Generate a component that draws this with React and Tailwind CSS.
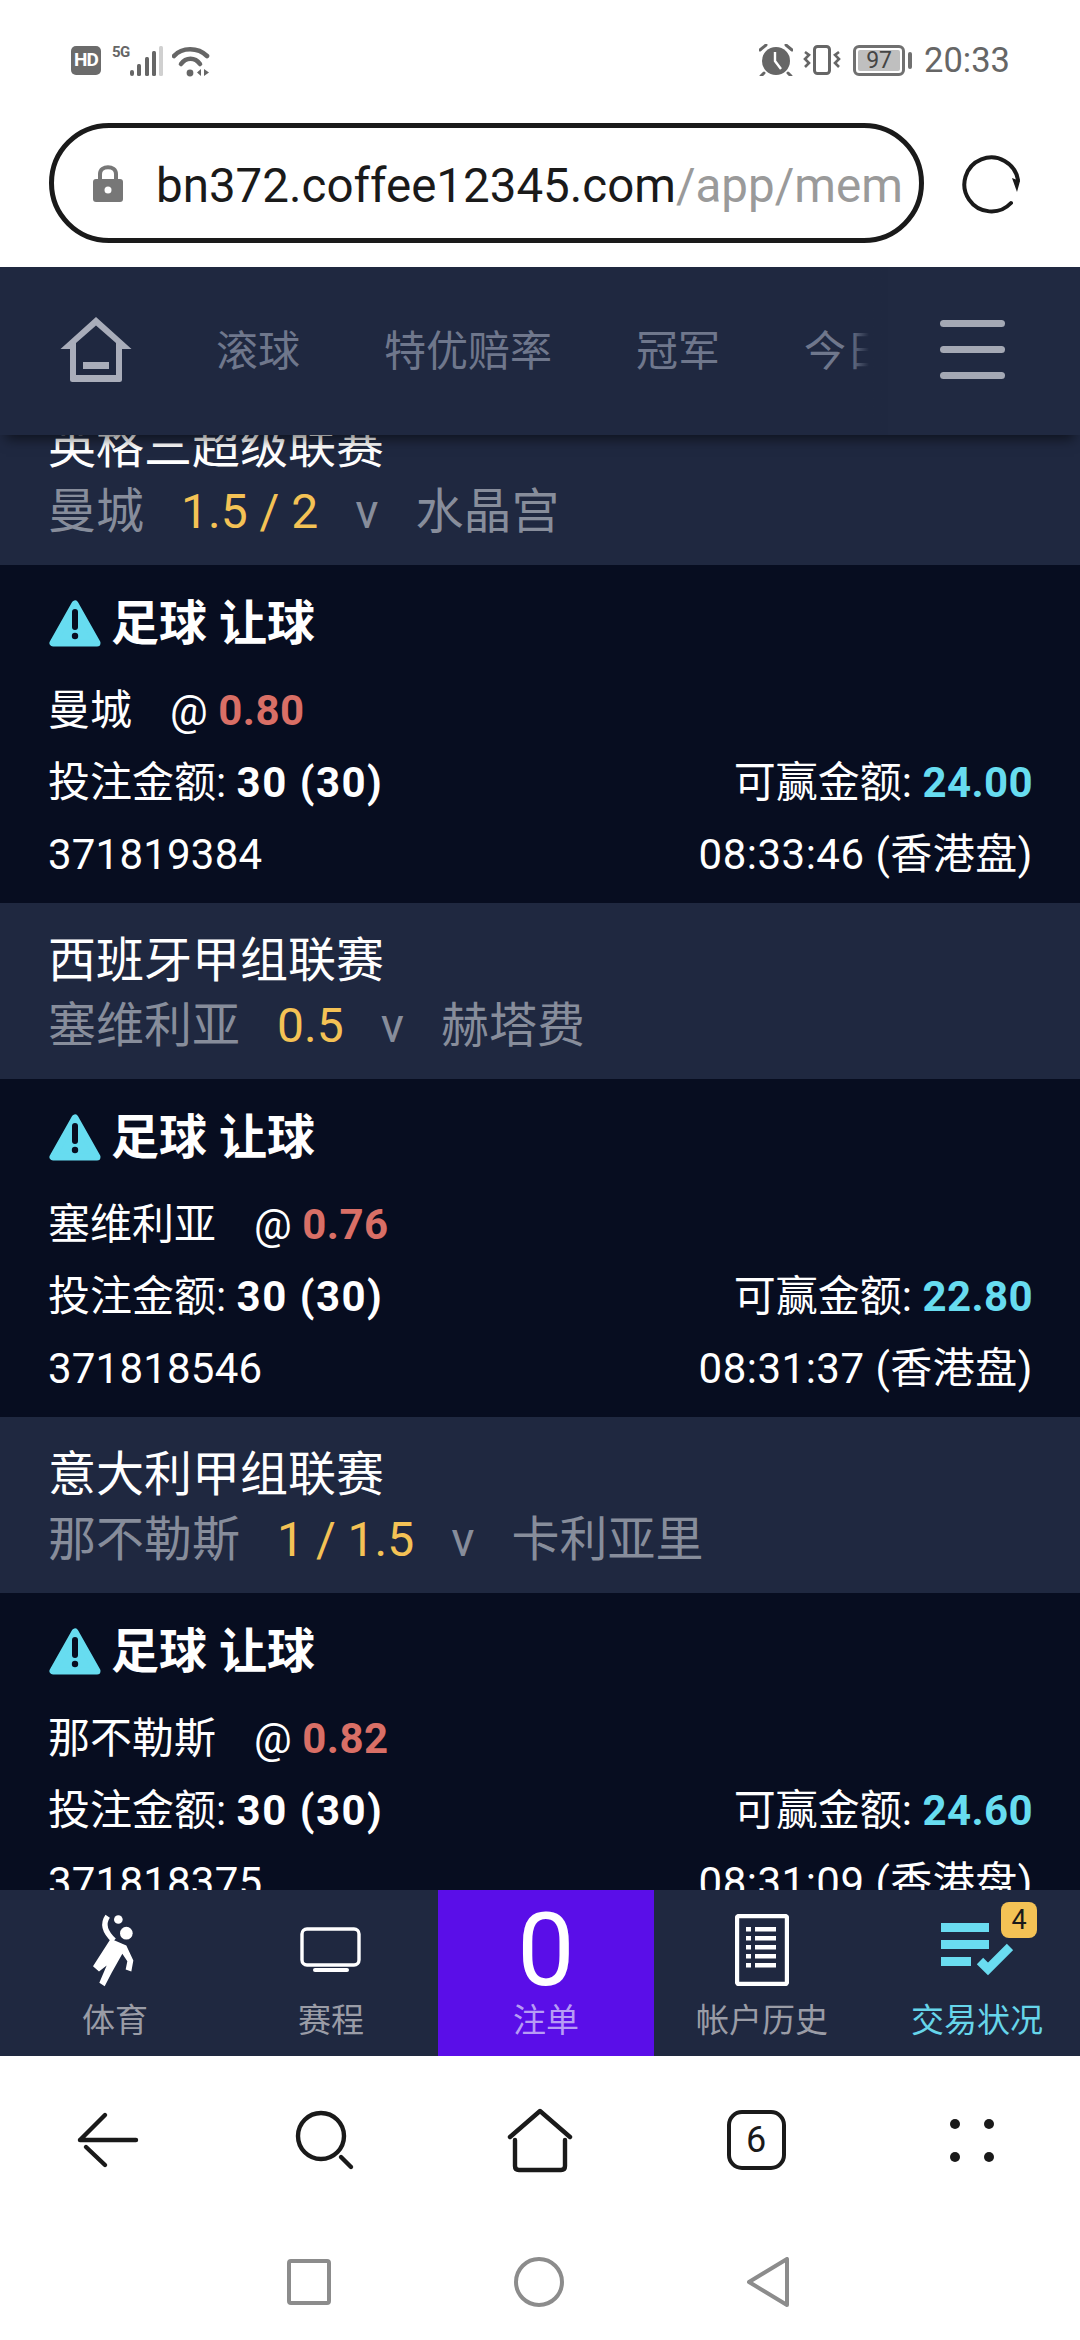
import React from "react";

const bets = [
  {
    league: "英格三超级联赛",
    home: "曼城",
    line: "1.5 / 2",
    away: "水晶宫",
    odds: "0.80",
    win: "24.00",
    id: "371819384",
    time: "08:33:46",
    clipped: true,
  },
  {
    league: "西班牙甲组联赛",
    home: "塞维利亚",
    line: "0.5",
    away: "赫塔费",
    odds: "0.76",
    win: "22.80",
    id: "371818546",
    time: "08:31:37",
  },
  {
    league: "意大利甲组联赛",
    home: "那不勒斯",
    line: "1 / 1.5",
    away: "卡利亚里",
    odds: "0.82",
    win: "24.60",
    id: "371818375",
    time: "08:31:09",
  },
];

const StatusBar = () => (
  <div className="flex h-[120px] items-center justify-between pl-[71px] pr-[70px] text-[#666666]">
    <div className="flex items-center">
      <div className="flex h-[29px] w-[30px] items-center justify-center rounded-[5px] bg-[#6b6b6b] text-[19px] font-bold tracking-[-1px] text-white">
        HD
      </div>
      <span className="mb-[16px] ml-[11px] text-[15px] font-bold leading-[14px] tracking-[-0.5px]">5G</span>
      <svg width="34" height="32" viewBox="0 0 34 32" className="mt-[1px]" fill="#666666">
        <rect x="0" y="25" width="4" height="6" rx="2" />
        <rect x="7" y="19" width="4" height="12" rx="1.5" />
        <rect x="15" y="12" width="4" height="19" rx="1.5" />
        <rect x="22" y="6" width="4" height="25" rx="1.5" />
        <rect x="29" y="1" width="4" height="30" rx="1.5" fill="#d0d0d0" />
      </svg>
      <svg width="38" height="32" viewBox="0 0 38 32" className="ml-[8px] mt-[1px]" fill="none">
        <path d="M2 11 C10 2 26 2 35 11" stroke="#666666" strokeWidth="4.6" strokeLinecap="round" />
        <path d="M9 19 C14 12 23 12 28 19" stroke="#666666" strokeWidth="4.6" strokeLinecap="round" />
        <circle cx="18" cy="28" r="3.4" fill="#666666" />
        <path d="M29 24 V31 L25 27.5 Z M32 24 V31 L37 27.5 Z" fill="#666666" />
      </svg>
    </div>
    <div className="flex items-center">
      <svg width="34" height="32" viewBox="0 0 34 32" fill="none">
        <circle cx="17" cy="17" r="14" fill="#666666" />
        <path d="M16 8 V17 L22 25" stroke="#ffffff" strokeWidth="2.4" />
        <path d="M1 6 L7 1 M33 6 L27 1 M5 29 L2 32 M29 29 L32 32" stroke="#666666" strokeWidth="3" strokeLinecap="round" />
      </svg>
      <svg width="38" height="30" viewBox="0 0 38 30" className="ml-[10px]" fill="none" stroke="#666666">
        <rect x="11.5" y="1.5" width="15" height="27" rx="3" strokeWidth="3" />
        <path d="M2 7 L6 10 L2 14 L6 18 L2 22 M36 7 L32 10 L36 14 L32 18 L36 22" strokeWidth="2.6" />
      </svg>
      <div className="ml-[12px] flex h-[31px] w-[52px] items-center justify-center rounded-[6px] border-[3px] border-[#707070]">
        <div className="flex h-[21px] w-[42px] items-center justify-center rounded-[2px] bg-[#bfbfbf] text-[23px] leading-none text-[#444444]">
          97
        </div>
      </div>
      <div className="ml-[3px] h-[17px] w-[4px] rounded-[2px] bg-[#707070]" />
      <span className="ml-[12px] text-[34.5px] leading-[40px]">20:33</span>
    </div>
  </div>
);

const BrowserBar = () => (
  <div className="flex h-[147px] items-start pl-[49px] pt-[3px]">
    <div className="flex h-[120px] w-[875px] items-center overflow-hidden rounded-full border-[5px] border-[#1a1a1a] pl-[38px]">
      <svg width="32" height="38" viewBox="0 0 32 38" className="shrink-0">
        <path d="M8 17 V10 C8 1 24 1 24 10 V17" stroke="#777777" strokeWidth="4" fill="none" />
        <rect x="1" y="15" width="30" height="23" rx="3" fill="#777777" />
        <circle cx="16" cy="26" r="3.5" fill="#ffffff" />
      </svg>
      <div className="ml-[32px] mt-[5px] overflow-hidden whitespace-nowrap text-[47.5px] leading-[64px] text-[#1a1a1a]">
        bn372.coffee12345.com<span className="text-[#9a9a9a]">/app/mem</span>
      </div>
    </div>
    <svg width="60" height="60" viewBox="0 0 60 60" fill="none" className="ml-[37px] mt-[31px]">
      <path d="M50 49 A27 27 0 1 1 57 26" stroke="#1a1a1a" strokeWidth="4" strokeLinecap="round" />
      <path d="M51 24 L59 27 L56 38 Z" fill="#1a1a1a" />
    </svg>
  </div>
);

const Header = () => (
  <div className="relative z-10 flex h-[168px] items-center bg-[#1f2840] shadow-[0_10px_12px_-6px_rgba(0,0,0,0.55)]">
    <div className="flex h-full w-[174px] shrink-0 items-center pl-[60px]">
      <svg width="72" height="66" viewBox="0 0 72 66" className="mb-[2px]" fill="#a9adba">
        <path
          fillRule="evenodd"
          d="M36 0 L71.5 32 H62 V62.5 Q62 65 59.5 65 H12.5 Q10 65 10 62.5 V32 H0.5 Z M36 8.5 L16 26 V58 H56 V26 Z"
        />
        <rect x="23" y="45" width="26" height="7" />
      </svg>
    </div>
    <div className="relative flex h-full w-[714px] items-center overflow-hidden whitespace-nowrap text-[42px] text-[#6f778c]">
      <span className="px-[42px]">滚球</span>
      <span className="px-[42px]">特优赔率</span>
      <span className="px-[42px]">冠军</span>
      <span className="px-[42px]">今日</span>
      <div className="absolute right-0 top-0 h-full w-[38px] bg-linear-to-r from-transparent to-[#1f2840] to-50%" />
    </div>
    <div className="flex h-full flex-1 flex-col items-end justify-center gap-[19px] bg-[#202941] pr-[75px] pb-[4px]">
      <div className="h-[7px] w-[65px] rounded-full bg-[#a4a8b4]" />
      <div className="h-[7px] w-[65px] rounded-full bg-[#a4a8b4]" />
      <div className="h-[7px] w-[65px] rounded-full bg-[#a4a8b4]" />
    </div>
  </div>
);

const WarningIcon = () => (
  <svg width="52" height="47" viewBox="0 0 52 47" className="shrink-0">
    <path d="M26 4 L4 43 H48 Z" fill="#67dcf0" stroke="#67dcf0" strokeWidth="7" strokeLinejoin="round" />
    <rect x="23" y="9" width="6" height="21" rx="3" fill="#070d20" />
    <circle cx="26" cy="36" r="3.2" fill="#070d20" />
  </svg>
);

const BetGroup = ({ bet }) => (
  <>
    <div
      className={
        bet.clipped
          ? "flex h-[130px] flex-col justify-end overflow-hidden bg-[#1f2840] pb-[21px] pl-[48px]"
          : "flex h-[176px] flex-col justify-end overflow-hidden bg-[#1f2840] pb-[21px] pl-[48px]"
      }
    >
      <div className="text-[48px] leading-[66px] text-white">{bet.league}</div>
      <div className="flex gap-[37px] text-[48px] leading-[64px] text-[#878d9b]">
        <span>{bet.home}</span>
        <span className="text-[#f4c255]">{bet.line}</span>
        <span>v</span>
        <span>{bet.away}</span>
      </div>
    </div>
    <div className="h-[338px] bg-[#070d20] pl-[48px] pr-[47px] pt-[22px] text-[42px] leading-[72px] text-white">
      <div className="mb-[15px] flex items-center gap-[10px] text-[48px] font-bold">
        <div className="ml-[1px] shrink-0">
          <WarningIcon />
        </div>
        <span className="pt-[1px]">足球 让球</span>
      </div>
      <div>
        <span className="mr-[38px]">{bet.home}</span>@ <span className="font-bold tracking-[0.5px] text-[#d96f66]">{bet.odds}</span>
      </div>
      <div className="flex justify-between">
        <div>
          投注金额: <span className="font-bold tracking-[1.5px]">30 (30)</span>
        </div>
        <div>
          可赢金额: <span className="font-bold tracking-[0.4px] text-[#67dcf0]">{bet.win}</span>
        </div>
      </div>
      <div className="flex justify-between">
        <div className="tracking-[0.2px]">{bet.id}</div>
        <div className="tracking-[0.5px]">{bet.time} (香港盘)</div>
      </div>
    </div>
  </>
);

const NavItem = ({ label, labelClass = "text-[#9a9ca6]", className = "", children }) => (
  <div className={`flex flex-col items-center pt-[16px] ${className}`}>
    <div className="relative flex h-[88px] w-full items-center justify-center">{children}</div>
    <div className={`mt-[7px] whitespace-nowrap text-[33px] leading-[40px] ${labelClass}`}>{label}</div>
  </div>
);

const BottomNav = () => (
  <div className="grid h-[166px] grid-cols-[216px_216px_216px_216px_210px] bg-[#1f2840] pl-[6px]">
    <NavItem label="体育" labelClass="ml-[2px] text-[#9a9ca6]">
      <svg width="50" height="77" viewBox="60 50 150 230" fill="#ffffff">
        <circle cx="148" cy="72" r="13" />
        <circle cx="172" cy="113" r="19" />
        <path d="M116 62 C100 85 108 110 135 135" stroke="#ffffff" strokeWidth="16" fill="none" />
        <path d="M125 130 L172 150 L193 195 L187 228 L170 222 L175 197 L160 175 L128 232 L107 272 L91 262 L113 210 L90 228 L72 212 Z" />
      </svg>
    </NavItem>
    <NavItem label="赛程" labelClass="ml-[2px] text-[#9a9ca6]">
      <svg width="62" height="46" viewBox="0 0 62 46" fill="none" className="ml-[2px]">
        <rect x="2" y="2" width="57" height="36" rx="5" stroke="#ffffff" strokeWidth="3.4" />
        <rect x="13" y="41" width="36" height="4" rx="2" fill="#ffffff" />
      </svg>
    </NavItem>
    <NavItem label="注单" labelClass="text-[#b79cf5]" className="bg-[#5a0ee8]">
      <span className="text-[102px] leading-[88px] text-white">0</span>
    </NavItem>
    <NavItem label="帐户历史">
      <svg width="54" height="72" viewBox="0 0 54 72" fill="#ffffff">
        <rect x="2" y="2" width="50" height="68" rx="2" fill="none" stroke="#ffffff" strokeWidth="4.4" />
        <rect x="11" y="13" width="5" height="4.5" />
        <rect x="20" y="13" width="21" height="4.5" />
        <rect x="11" y="22" width="5" height="4.5" />
        <rect x="20" y="22" width="21" height="4.5" />
        <rect x="11" y="31" width="5" height="4.5" />
        <rect x="20" y="31" width="21" height="4.5" />
        <rect x="11" y="40" width="5" height="4.5" />
        <rect x="20" y="40" width="21" height="4.5" />
        <rect x="11" y="49" width="5" height="4.5" />
        <rect x="20" y="49" width="21" height="4.5" />
      </svg>
    </NavItem>
    <NavItem label="交易状况" labelClass="ml-[4px] text-[#66d5ea]">
      <svg width="72" height="54" viewBox="0 0 72 54" fill="#6adcf0" className="ml-[4px]">
        <rect x="0" y="0" width="48" height="9" />
        <rect x="0" y="17" width="48" height="9" />
        <rect x="0" y="34" width="30" height="9" />
        <path d="M39 38 L47 46 L69 24" fill="none" stroke="#6adcf0" strokeWidth="9" />
      </svg>
      <div className="absolute right-[43px] top-[-4px] flex h-[36px] w-[36px] items-center justify-center rounded-[8px] bg-[#f4c255] text-[27px] leading-none text-[#1a1a1a]">
        4
      </div>
    </NavItem>
  </div>
);

const BrowserTools = () => (
  <div className="grid h-[168px] grid-cols-5 items-center justify-items-center text-[#1a1a1a]">
    <svg width="72" height="72" viewBox="0 0 72 72" fill="none" stroke="#1a1a1a" strokeWidth="4.4" strokeLinecap="round">
      <path d="M8 36 H64 M8 36 L33 11 M14 43 L33 61" />
    </svg>
    <svg width="72" height="72" viewBox="0 0 72 72" fill="none" stroke="#1a1a1a" strokeWidth="4.4" strokeLinecap="round" className="ml-[3px]">
      <circle cx="31" cy="32" r="23" />
      <path d="M51 53 L61 63" />
    </svg>
    <svg width="72" height="72" viewBox="0 0 72 72" fill="none" stroke="#1a1a1a" strokeWidth="4.4" strokeLinecap="round">
      <path d="M6 33 L36 7 L66 33" strokeLinejoin="round" />
      <path d="M11 36 V62 Q11 66 15 66 H57 Q61 66 61 62 V36" />
    </svg>
    <div className="flex h-[60px] w-[59px] items-center justify-center rounded-[15px] border-[4px] border-[#1a1a1a] text-[36px] leading-none">
      6
    </div>
    <div className="grid grid-cols-2 gap-x-[24px] gap-y-[23px]">
      <div className="h-[10px] w-[10px] rounded-full bg-[#1a1a1a]" />
      <div className="h-[10px] w-[10px] rounded-full bg-[#1a1a1a]" />
      <div className="h-[10px] w-[10px] rounded-full bg-[#1a1a1a]" />
      <div className="h-[10px] w-[10px] rounded-full bg-[#1a1a1a]" />
    </div>
  </div>
);

const SystemNav = () => (
  <div className="flex h-[116px] items-center gap-[183px] pl-[287px]">
    <svg width="44" height="46" viewBox="0 0 44 46" fill="none" stroke="#8c8c8c" strokeWidth="4">
      <rect x="2" y="2" width="40" height="42" rx="2" />
    </svg>
    <svg width="50" height="50" viewBox="0 0 50 50" fill="none" stroke="#8c8c8c" strokeWidth="4">
      <circle cx="25" cy="25" r="23" />
    </svg>
    <svg width="42" height="50" viewBox="0 0 42 50" fill="none" stroke="#8c8c8c" strokeWidth="4" strokeLinejoin="round">
      <path d="M40 2 V48 L2 25 Z" />
    </svg>
  </div>
);

export default function App() {
  return (
    <div className="flex h-[2340px] w-[1080px] flex-col overflow-hidden bg-white font-[family-name:Roboto,'Noto_Sans_CJK_SC',sans-serif]">
      <StatusBar />
      <BrowserBar />
      <Header />
      <div className="min-h-0 flex-1 overflow-hidden bg-[#070d20]">
        {bets.map((bet) => (
          <BetGroup key={bet.id} bet={bet} />
        ))}
      </div>
      <BottomNav />
      <BrowserTools />
      <SystemNav />
    </div>
  );
}
